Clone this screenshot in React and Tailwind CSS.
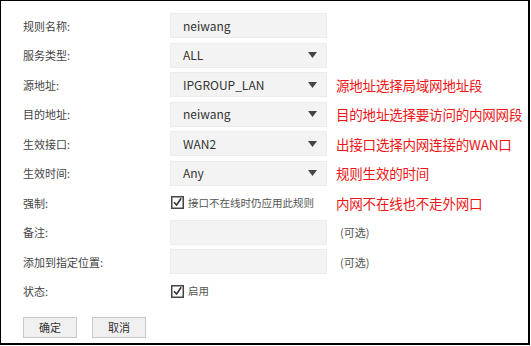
import React from 'react';

const cjk = { fontFamily: '"Noto Sans CJK SC", "Noto Sans", sans-serif' };

function Arrow() {
  return (
    <svg width="9" height="6" viewBox="0 0 9 6" className="shrink-0">
      <path d="M0 0 L9 0 L4.5 6 Z" fill="#444" />
    </svg>
  );
}

function Check() {
  return (
    <svg width="13" height="13" viewBox="0 0 13 13" className="shrink-0">
      <rect x="0.75" y="0.75" width="11.5" height="11.5" fill="#fff" stroke="#444" strokeWidth="1.5" />
      <path d="M3 6.2 L5.6 9 L10.2 2.2" fill="none" stroke="#333" strokeWidth="1.6" />
    </svg>
  );
}

function Field({ value, select }) {
  return (
    <div className="w-[157px] shrink-0 h-[25px] bg-[#f3f3f3] border border-[#ececec] flex items-center justify-between pl-[12px] pr-[9px] text-[12px] text-[#333]">
      <span>{value}</span>
      {select && <Arrow />}
    </div>
  );
}

function Row({ label, children, note, hint }) {
  return (
    <div className="h-[29.5px] flex items-center">
      <div className="w-[169px] shrink-0 pl-[22px] text-[11px] text-[#444]">{label}</div>
      {children}
      {note && <span className="ml-[9px] shrink-0 whitespace-nowrap text-[13.5px] tracking-[-0.2px] text-[#ee1515]">{note}</span>}
      {hint && <span className="ml-[13px] text-[11px] text-[#555]">{hint}</span>}
    </div>
  );
}

export default function App() {
  const rows = [
    { label: '规则名称:', value: 'neiwang' },
    { label: '服务类型:', value: 'ALL', select: true },
    { label: '源地址:', value: 'IPGROUP_LAN', select: true, note: '源地址选择局域网地址段' },
    { label: '目的地址:', value: 'neiwang', select: true, note: '目的地址选择要访问的内网网段' },
    { label: '生效接口:', value: 'WAN2', select: true, note: '出接口选择内网连接的WAN口' },
    { label: '生效时间:', value: 'Any', select: true, note: '规则生效的时间' },
  ];

  return (
    <div className="w-[531px] h-[346px] bg-white" style={cjk}>
      <div className="w-[530px] h-[345px] border-t border-l border-r-2 border-b-2 border-black pt-[10px] flex flex-col">
        {rows.map((r) => (
          <Row key={r.label} label={r.label} note={r.note}>
            <Field value={r.value} select={r.select} />
          </Row>
        ))}
        <Row label="强制:" note="内网不在线也不走外网口">
          <div className="w-[157px] shrink-0 flex items-center gap-[4px] pl-[1px] text-[10.5px] text-[#555]">
            <Check />
            <span>接口不在线时仍应用此规则</span>
          </div>
        </Row>
        <Row label="备注:" hint="(可选)">
          <Field value="" />
        </Row>
        <Row label="添加到指定位置:" hint="(可选)">
          <Field value="" />
        </Row>
        <Row label="状态:">
          <div className="flex items-center gap-[4px] pl-[1px] text-[10.5px] text-[#555]">
            <Check />
            <span>启用</span>
          </div>
        </Row>
        <div className="flex gap-[15px] pl-[22px] mt-[11px]">
          <button className="w-[54px] h-[21px] bg-[#f0f0f0] border border-[#c8c8c8] text-[11px] text-[#333]">确定</button>
          <button className="w-[54px] h-[21px] bg-[#f0f0f0] border border-[#c8c8c8] text-[11px] text-[#333]">取消</button>
        </div>
      </div>
    </div>
  );
}
